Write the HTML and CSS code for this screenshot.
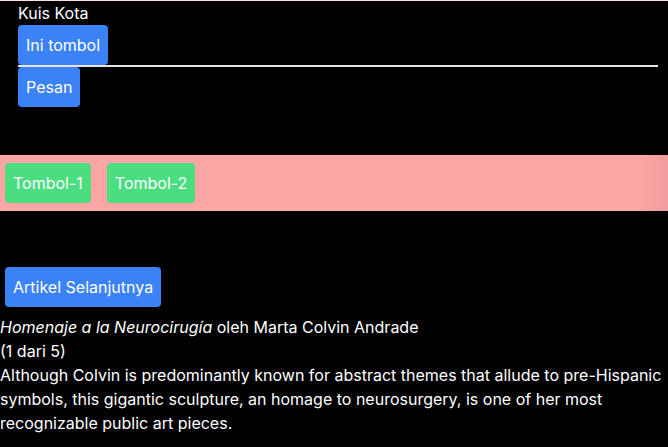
FILE: index.html
```html
<!DOCTYPE html>
<html lang="id">
<head>
<meta charset="utf-8">
<title>Kuis Kota</title>
<link rel="stylesheet" href="styles.css">
</head>
<body>
  <div class="quiz">
    <div class="quiz-title">Kuis Kota</div>
    <button class="btn btn-blue">Ini tombol</button>
    <hr class="divider">
    <button class="btn btn-blue">Pesan</button>
  </div>

  <div class="band">
    <button class="btn btn-green">Tombol-1</button>
    <button class="btn btn-green">Tombol-2</button>
  </div>

  <div class="nav">
    <button class="btn btn-blue">Artikel Selanjutnya</button>
  </div>

  <p class="caption"><em>Homenaje a la Neurocirugía</em> oleh Marta Colvin Andrade<br>(1 dari 5)<br>Although Colvin is predominantly known for abstract themes that allude to pre-Hispanic symbols, this gigantic sculpture, an homage to neurosurgery, is one of her most recognizable public art pieces.</p>
</body>
</html>
```

FILE: styles.css
```css
* {
  box-sizing: border-box;
}

html, body {
  margin: 0;
  padding: 0;
  background: #000;
}

body {
  border-top: 1px solid #f6e2e2;
  color: #fff;
  font-family: Inter, "Noto Sans", sans-serif;
  font-size: 16px;
  line-height: 24px;
}

.btn {
  display: block;
  border: 0;
  margin: 0;
  padding: 8px;
  border-radius: 4px;
  color: #fff;
  font-family: inherit;
  font-size: 16px;
  line-height: 24px;
  cursor: pointer;
}

.btn-blue {
  background: #3b82f6;
}

.btn-green {
  background: #4ade80;
}

.quiz {
  display: flex;
  flex-direction: column;
  align-items: flex-start;
  padding: 0 10px 0 18px;
}

.divider {
  align-self: stretch;
  margin: 0;
  height: 0;
  border: 0;
  border-top: 2px solid #e5e5ea;
}

.band {
  margin-top: 48px;
  display: flex;
  gap: 16px;
  padding: 8px 5px;
  background: linear-gradient(to right, #fca5a5 0, #fca5a5 calc(100% - 26px), #f09d9f 100%);
}

.nav {
  margin-top: 56px;
  padding-left: 5px;
  display: flex;
}

.caption {
  margin: 8px 0 0;
}
```
